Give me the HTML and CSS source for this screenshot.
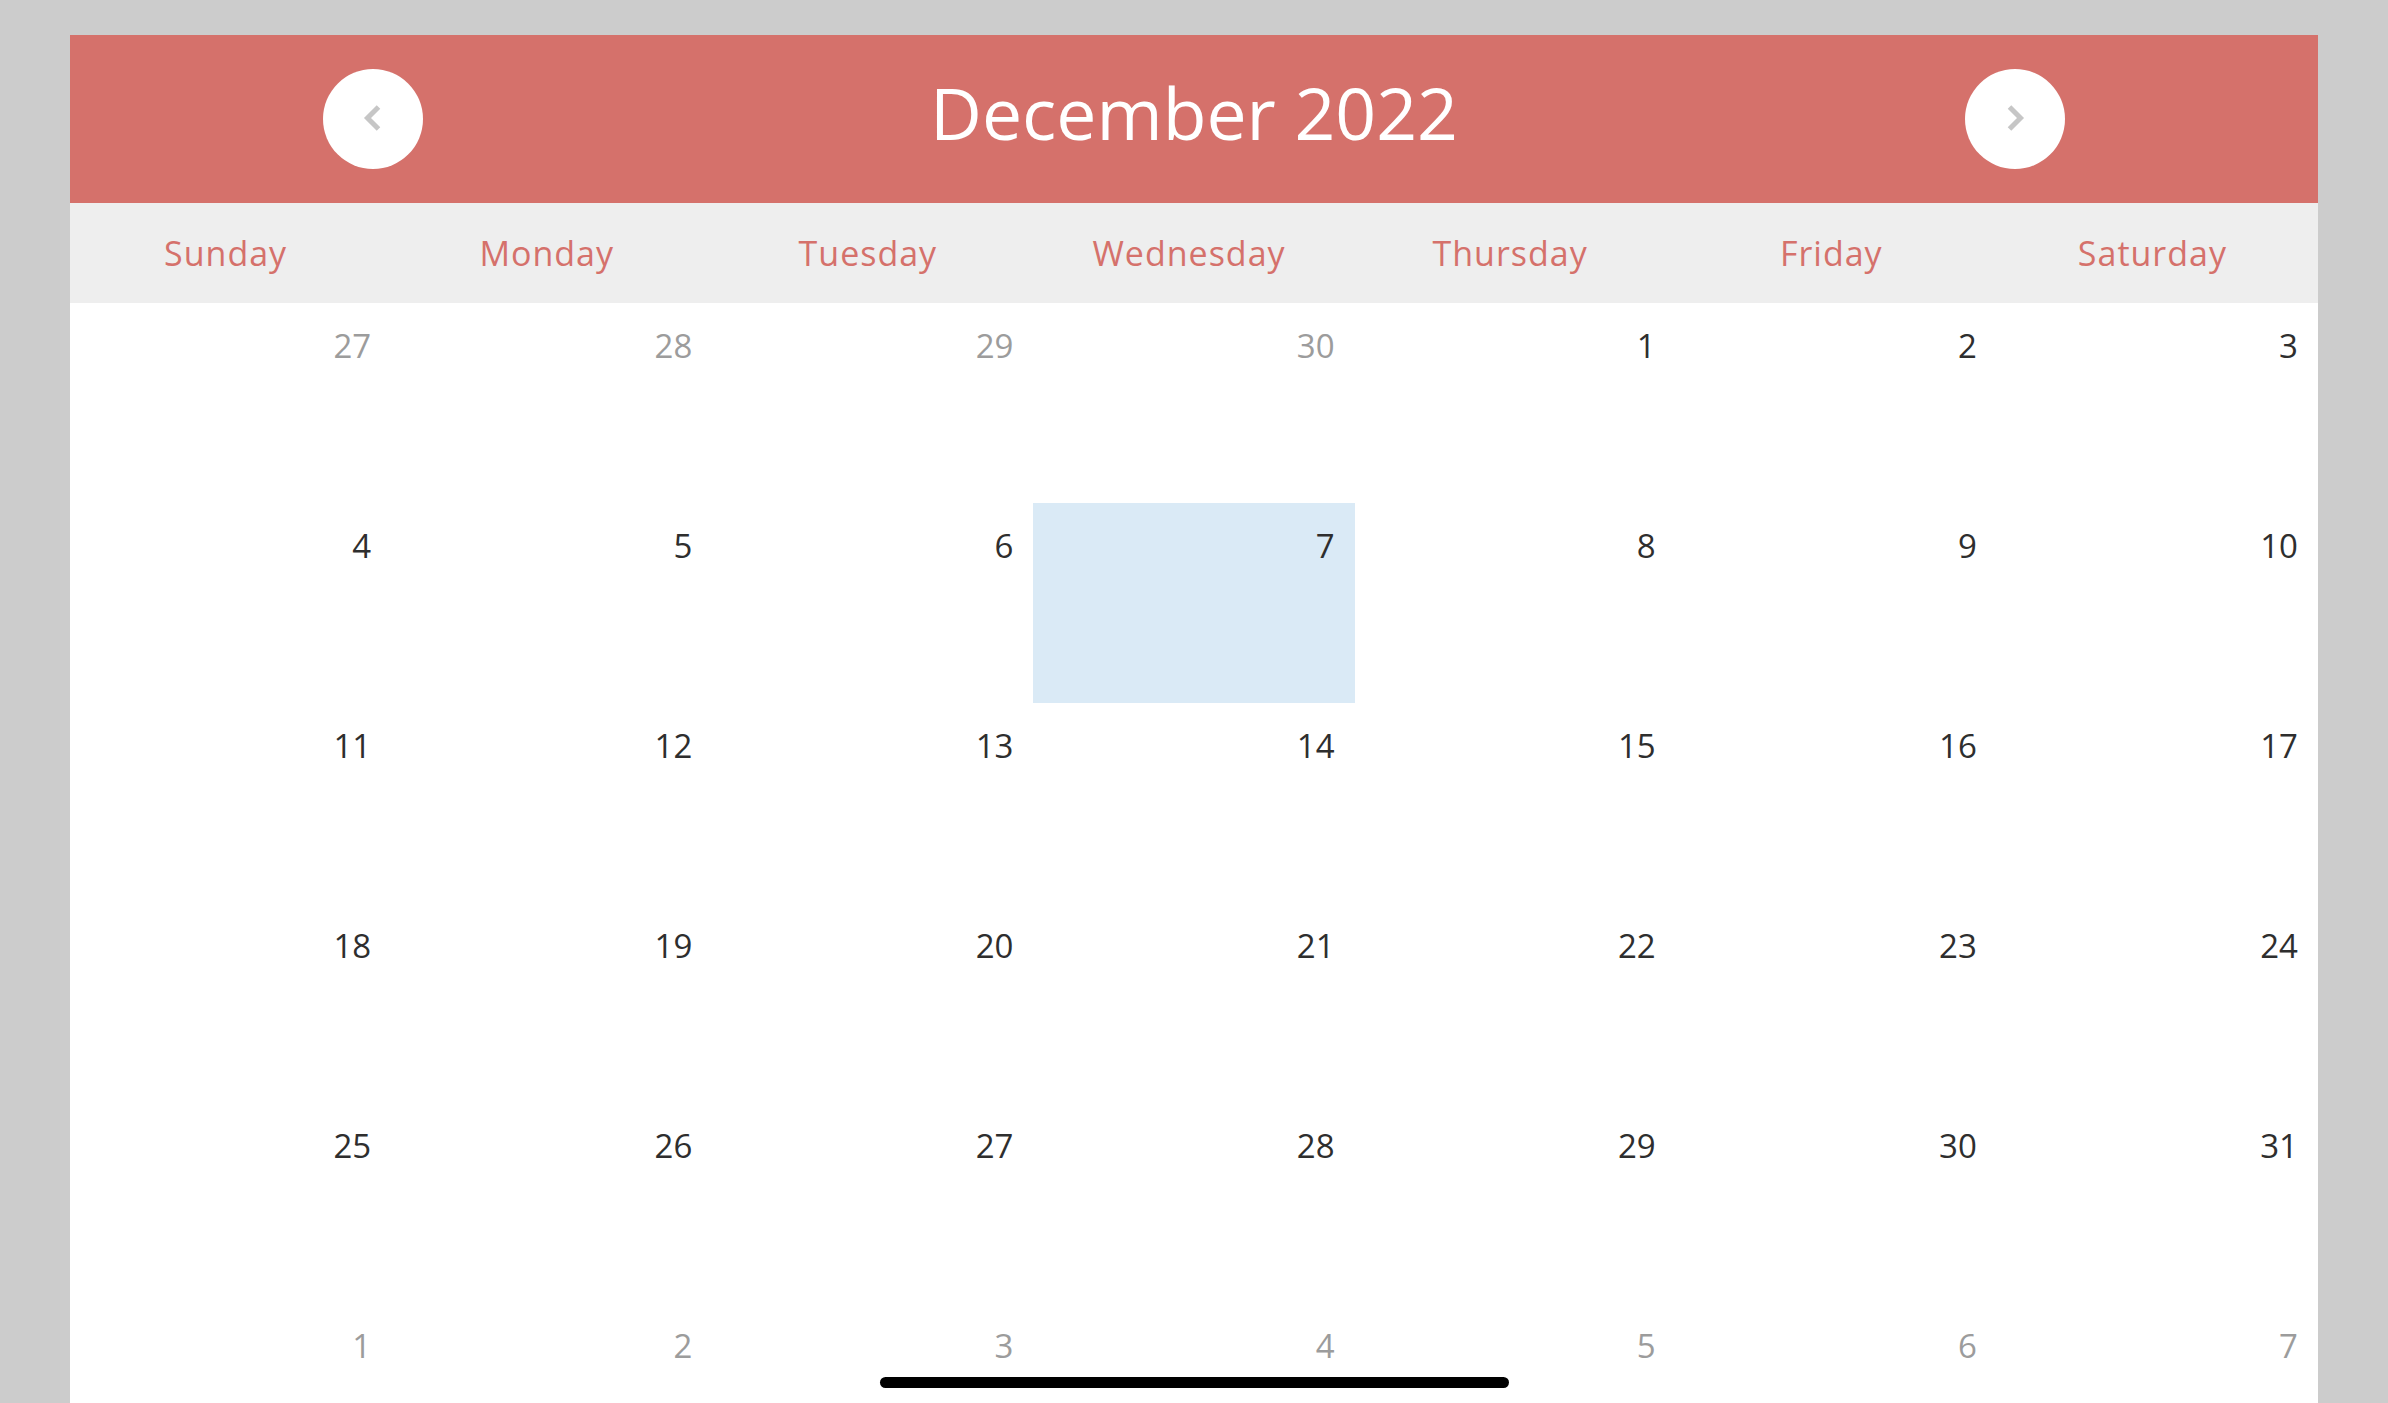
FILE: index.html
```html
<!DOCTYPE html>
<html lang="en">
<head>
<meta charset="utf-8">
<title>December 2022</title>
<link rel="stylesheet" href="styles.css">
</head>
<body>
<div class="calendar">
  <header class="cal-header">
    <button class="nav-btn" aria-label="Previous month">
      <svg viewBox="0 0 100 100" width="100" height="100"><polyline points="55.5,38 44.5,49 55.5,60" class="chev"/></svg>
    </button>
    <h1 class="cal-title">December 2022</h1>
    <button class="nav-btn" aria-label="Next month">
      <svg viewBox="0 0 100 100" width="100" height="100"><polyline points="44.5,38 55.5,49 44.5,60" class="chev"/></svg>
    </button>
  </header>
  <div class="weekdays">
    <div class="weekday">Sunday</div>
    <div class="weekday">Monday</div>
    <div class="weekday">Tuesday</div>
    <div class="weekday">Wednesday</div>
    <div class="weekday">Thursday</div>
    <div class="weekday">Friday</div>
    <div class="weekday">Saturday</div>
  </div>
  <div class="days">
    <div class="day muted">27</div>
    <div class="day muted">28</div>
    <div class="day muted">29</div>
    <div class="day muted">30</div>
    <div class="day">1</div>
    <div class="day">2</div>
    <div class="day">3</div>
    <div class="day">4</div>
    <div class="day">5</div>
    <div class="day">6</div>
    <div class="day selected">7</div>
    <div class="day">8</div>
    <div class="day">9</div>
    <div class="day">10</div>
    <div class="day">11</div>
    <div class="day">12</div>
    <div class="day">13</div>
    <div class="day">14</div>
    <div class="day">15</div>
    <div class="day">16</div>
    <div class="day">17</div>
    <div class="day">18</div>
    <div class="day">19</div>
    <div class="day">20</div>
    <div class="day">21</div>
    <div class="day">22</div>
    <div class="day">23</div>
    <div class="day">24</div>
    <div class="day">25</div>
    <div class="day">26</div>
    <div class="day">27</div>
    <div class="day">28</div>
    <div class="day">29</div>
    <div class="day">30</div>
    <div class="day">31</div>
    <div class="day muted">1</div>
    <div class="day muted">2</div>
    <div class="day muted">3</div>
    <div class="day muted">4</div>
    <div class="day muted">5</div>
    <div class="day muted">6</div>
    <div class="day muted">7</div>
  </div>
</div>
<div class="home-indicator"></div>
</body>
</html>
```
FILE: styles.css
```css
html, body {
  margin: 0;
  padding: 0;
  height: 1403px;
  overflow: hidden;
}
body {
  background: #cccccc;
  font-family: "Open Sans", "Liberation Sans", sans-serif;
  padding-top: 35px;
  box-sizing: border-box;
}
.calendar {
  margin: 0 70px;
  background: #ffffff;
  height: 1368px;
  overflow: hidden;
}
.cal-header {
  height: 168px;
  background: #d5716b;
  display: flex;
  align-items: center;
  justify-content: space-between;
  padding: 0 253px;
  box-sizing: border-box;
}
.nav-btn {
  width: 100px;
  height: 100px;
  border-radius: 50%;
  border: none;
  background: #ffffff;
  padding: 0;
  display: block;
  margin-top: -1px;
}
.nav-btn svg {
  display: block;
}
.chev {
  fill: none;
  stroke: #c6c6c6;
  stroke-width: 5;
  stroke-linecap: butt;
  stroke-linejoin: miter;
}
.cal-title {
  margin: -13px 0 0;
  font-weight: 400;
  font-size: 71.5px;
  color: #ffffff;
  line-height: 1.36;
}
.weekdays {
  display: grid;
  grid-template-columns: repeat(7, 1fr);
  height: 100px;
  background: #eeeeee;
}
.weekday {
  display: flex;
  align-items: center;
  justify-content: center;
  color: #d5716b;
  font-size: 34px;
  letter-spacing: 1px;
  padding-right: 10px;
}
.days {
  display: grid;
  grid-template-columns: repeat(7, 1fr);
  grid-auto-rows: 200px;
}
.day {
  text-align: right;
  padding: 21px 20px 0 0;
  font-size: 33px;
  color: #2e2e2e;
  line-height: 1.36;
}
.day.muted {
  color: #9c9c9c;
}
.day.selected {
  background: #daeaf6;
}
.home-indicator {
  position: absolute;
  left: 880px;
  top: 1377px;
  width: 629px;
  height: 11px;
  border-radius: 6px;
  background: #000000;
}
```
